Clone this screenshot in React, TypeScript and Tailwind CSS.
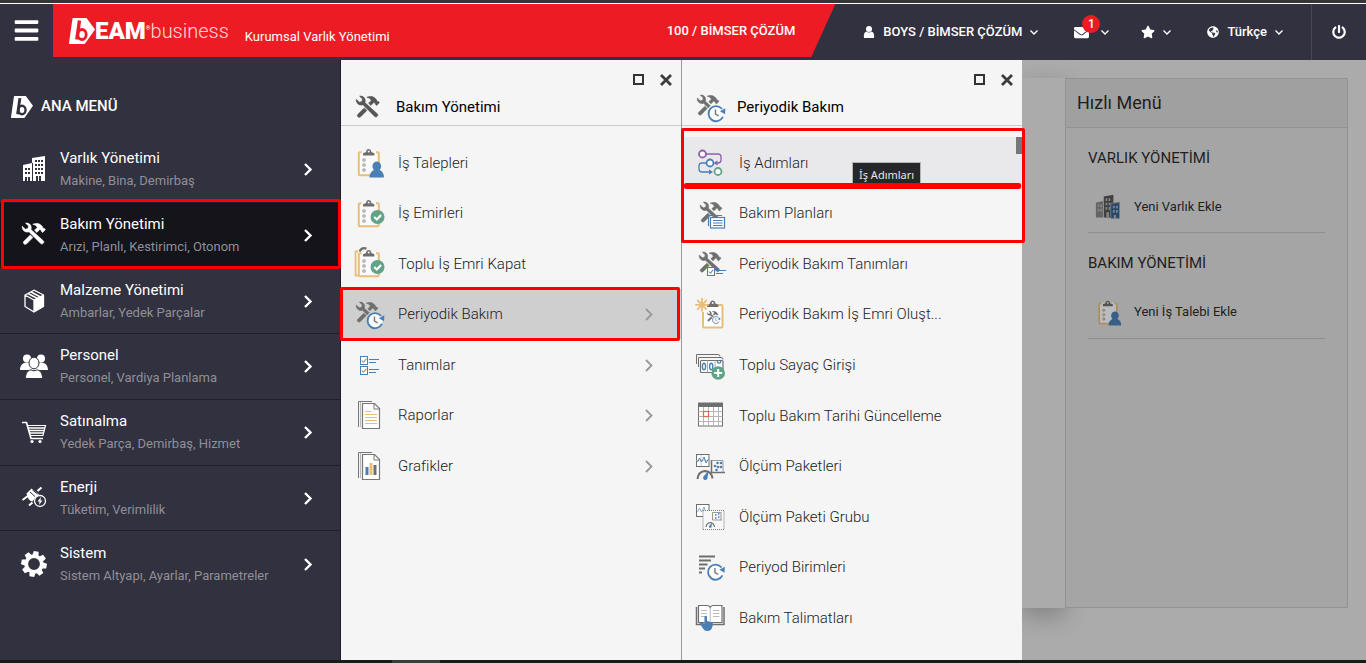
import type { ReactNode } from 'react'
import { FaBars, FaEnvelope, FaGlobeAmericas, FaPowerOff, FaStar } from 'react-icons/fa'

const GRAY = '#6f6f6f'
const BLUE = '#4a7fb5'
const SAND = '#e8bf78'
const GREEN = '#62a287'
const PURPLE = '#8e5fae'

/* ---------- shared icon parts ---------- */

function Svg({ children, size = 32 }: { children: ReactNode; size?: number }) {
  return (
    <svg viewBox="0 0 32 32" width={size} height={size} fill="none" aria-hidden="true" className="shrink-0">
      {children}
    </svg>
  )
}

function ToolsShape({ x, y, scale = 1, color = GRAY }: { x: number; y: number; scale?: number; color?: string }) {
  return (
    <g transform={`translate(${x} ${y}) scale(${scale})`} fill={color} stroke={color} strokeWidth="0.6">
      <path d="M.3 3.2 3.4 6.2 6 5.6 6.6 3 3.6.2C6.4-.4 9.4 1.6 9.2 5l-.3 1.6 12.4 11.2c1.6 1.6-.9 4.3-2.6 2.7L7 8.800c-3.600 1.200-7.200-1.600-6.700-5.600z" />
      <path d="M10.800 1.300C13 .1 16.800.1 18.600 1.800l1.900 2 .4 1.400 1.500.3 1 1.100-2.700 2.900-1.300-1.200-.2-1.300-1.500-.5-2.800 2.900-2.300-2.200 2.700-2.800c-.9-1.700-2.300-2.700-4.500-3.100z" />
      <path d="m8.300 12 2.600 2.400-6.300 6.400c-1.800 1.600-4.400-.7-2.700-2.500z" />
    </g>
  )
}

function ClockShape({ x, y, scale = 1, paper = '#f5f5f5' }: { x: number; y: number; scale?: number; paper?: string }) {
  return (
    <g transform={`translate(${x} ${y}) scale(${scale})`}>
      <circle r="8.800" fill={paper} />
      <circle r="7" fill="#fbfbfb" />
      <path d="M6.400 3.200A7 7 0 1 1 5.600-4.200" stroke={BLUE} strokeWidth="1.700" />
      <path d="M8.600-4.800 8.400.6 3.600-2z" fill={BLUE} />
      <path d="M-.5-3.800V.6l3 1.600" stroke="#777" strokeWidth="1.300" />
    </g>
  )
}

function ClipShape({ x, y }: { x: number; y: number }) {
  return (
    <g transform={`translate(${x} ${y})`}>
      <path d="M0 6.500V4.200L3 3C3.200 1 4.300 0 5.700 0s2.500 1 2.700 3l3 1.200v2.300z" fill={GRAY} />
      <circle cx="5.700" cy="2.600" r="1" fill="#f4f4f4" />
    </g>
  )
}

function BoardShape() {
  return (
    <g>
      <rect x="4.800" y="6.200" width="20" height="23" rx="1" fill="#fafafa" stroke={SAND} strokeWidth="2" />
      <rect x="7.500" y="5" width="14.500" height="4" fill="#fafafa" />
      <ClipShape x={9} y={3} />
      <g stroke="#9a9a9a" strokeWidth="1.100">
        <circle cx="10" cy="14" r="1.200" />
        <circle cx="10" cy="19" r="1.200" />
        <circle cx="10" cy="24" r="1.200" />
      </g>
    </g>
  )
}

function CheckBadge() {
  return (
    <g>
      <circle cx="23.500" cy="20" r="7" fill={GREEN} />
      <path d="m20.200 20 2.600 2.500 4.300-4.600" stroke="#fff" strokeWidth="2.200" />
    </g>
  )
}

/* ---------- list icons ---------- */

function ToolsIcon() {
  return (
    <Svg>
      <ToolsShape x={2} y={5} color="#565656" />
    </Svg>
  )
}

function RequestIcon({ size = 32 }: { size?: number }) {
  return (
    <Svg size={size}>
      <BoardShape />
      <path d="M15.500 31.500c0-4 1.800-6.500 4.500-7.500-3-3-1.400-8.500 2.800-8.500s5.800 5.500 2.800 8.500c2.700 1 4.400 3.500 4.400 7.500z" fill={BLUE} />
    </Svg>
  )
}

function OrderIcon() {
  return (
    <Svg>
      <BoardShape />
      <CheckBadge />
    </Svg>
  )
}

function BulkOrderIcon() {
  return (
    <Svg>
      <path d="M4 4.500H1.500v24H4" stroke={SAND} strokeWidth="1.800" />
      <path d="M5.500 4.500C7 1.500 10 .8 12.500 1.600" stroke={GRAY} strokeWidth="2.200" />
      <BoardShape />
      <CheckBadge />
    </Svg>
  )
}

function PeriodicIcon({ paper }: { paper?: string }) {
  return (
    <Svg>
      <ToolsShape x={2} y={4} scale={0.94} />
      <ClockShape x={21} y={22.500} scale={1.08} paper={paper} />
    </Svg>
  )
}

function DefinitionsIcon() {
  return (
    <Svg>
      {[7, 17].map((y) => (
        <g key={y}>
          <rect x="6.500" y={y + 0.5} width="7" height="8" fill="#fff" stroke={BLUE} />
          <path d={`m8 ${y + 4.500} 1.500 1.800 3-3.600`} stroke="#666" />
          <path d={`M15 ${y + 3.500}h10M15 ${y + 6.500}h7`} stroke={BLUE} strokeWidth="1.100" />
        </g>
      ))}
    </Svg>
  )
}

function PagesShape() {
  return (
    <g stroke="#777">
      <path d="M4.500 28V2.500H18" />
      <path d="M6.500 28V3" stroke="#bbb" />
      <path d="M8.500 4.500h12l5 5v20h-17z" fill="#fff" strokeWidth="1.200" />
      <path d="M20 4.500V10h5.500" />
    </g>
  )
}

function ReportsIcon() {
  return (
    <Svg>
      <PagesShape />
      <path d="M11 12.500h6M11 15.500h12M11 18.500h12M11 21.500h12M11 24.500h12" stroke={SAND} />
    </Svg>
  )
}

function ChartsIcon() {
  return (
    <Svg>
      <PagesShape />
      <path d="M11.500 17h3v8h-3z" fill={BLUE} />
      <path d="M15.500 13h3v12h-3z" fill={SAND} />
      <path d="M19.500 15h3v10h-3z" fill={GRAY} />
    </Svg>
  )
}

function StepsIcon() {
  return (
    <Svg>
      <path d="M11 8h12q3 0 3 3v3q0 3-3 3h-2" stroke={PURPLE} strokeWidth="1.300" />
      <path d="m22.500 14.500-4 2.500 4 2.500z" fill={PURPLE} />
      <path d="M11 17H7q-3 0-3 3v3q0 3 3 3h8" stroke={BLUE} strokeWidth="1.300" />
      <path d="m14 23.500 4 2.500-4 2.500z" fill={BLUE} />
      <circle cx="7.500" cy="8" r="3.500" fill="#fff" stroke={PURPLE} strokeWidth="1.800" />
      <circle cx="15" cy="17" r="3.500" fill="#fff" stroke={BLUE} strokeWidth="1.800" />
      <circle cx="23" cy="25.500" r="3.500" fill="#fff" stroke={GREEN} strokeWidth="1.800" />
    </Svg>
  )
}

function PlansIcon() {
  return (
    <Svg>
      <ToolsShape x={5} y={5} scale={0.94} />
      <path d="M13.500 29V18.500H27" stroke={BLUE} strokeWidth="1.200" />
      <rect x="15.500" y="20.500" width="14" height="10.500" fill="#fff" stroke={BLUE} strokeWidth="1.200" />
      <path d="M18 23.500h9.500M18 26h9.500M18 28.500h9.500" stroke={BLUE} />
    </Svg>
  )
}

function PeriodicDefinitionsIcon() {
  return (
    <Svg>
      <ToolsShape x={4} y={5} scale={0.94} />
      <rect x="12.500" y="20.500" width="7" height="8" fill="#fff" stroke={BLUE} />
      <path d="m14 24.500 1.500 1.800 2.500-3.600" stroke="#666" />
      <path d="M21 23.500h10M21 26.500h7" stroke={BLUE} />
    </Svg>
  )
}

function CreateOrderIcon() {
  return (
    <Svg>
      <rect x="8" y="7" width="19.500" height="22.500" rx="1" fill="#fff" stroke={SAND} strokeWidth="2" />
      <path d="M0 0h14v14H0z" fill="#f5f5f5" />
      <path d="M9 15V8h14v7z" fill="#fff" />
      <ClipShape x={12} y={2.500} />
      <path d="M7 0v13.500M.2 6.800h13.500M2.200 2l9.600 9.600M11.800 2l-9.600 9.600" stroke={SAND} strokeWidth="1.800" />
      <ToolsShape x={12} y={13} scale={0.48} />
      <ClockShape x={21} y={22} scale={0.5} paper="#fff" />
    </Svg>
  )
}

function CounterIcon() {
  return (
    <Svg>
      <path d="M1.500 15V5.500H23q2 0 2 2" stroke={GRAY} />
      <path d="M3.500 18V8.500H26q2 0 2 2" stroke={GRAY} />
      <rect x="5.500" y="11.500" width="22.500" height="12" rx="1" fill="#fff" stroke={GRAY} strokeWidth="1.200" />
      <path d="M12.500 11.500v12M20 11.500v12" stroke="#aaa" />
      <g stroke={BLUE} strokeWidth="1.400">
        <ellipse cx="9" cy="17.500" rx="1.600" ry="3.200" />
        <ellipse cx="16.200" cy="17.500" rx="1.600" ry="3.200" />
        <path d="M22.500 11.500v1q0 1.600 1.600 1.600t1.600-1.600v-1" />
      </g>
      <circle cx="23.200" cy="24" r="6.800" fill={GREEN} />
      <path d="M23.200 20v8M19.200 24h8" stroke="#fff" strokeWidth="2" />
    </Svg>
  )
}

function CalendarIcon() {
  return (
    <Svg>
      <rect x="3.500" y="4.500" width="24" height="22.500" fill="#fff" stroke={GRAY} />
      <path d="M3.500 12.500h24M3.500 17.500h24M3.500 22.500h24M8.500 8v19M13.500 8v19M18.500 8v19M23.500 8v19" stroke="#b5b5b5" />
      <path d="M3 3.500h25V8H3z" fill={GRAY} />
      <rect x="8.500" y="12.500" width="5" height="5" stroke="#dd6b50" strokeWidth="1.200" />
    </Svg>
  )
}

function MeasureIcon() {
  return (
    <Svg>
      <rect x="1.500" y="4.500" width="12.500" height="12" fill="#fff" stroke={GRAY} />
      <path d="M1.500 10.500h12.500M6 5v11" stroke="#ccc" />
      <path d="m2.500 12 2-4 2 4 2.500-5 2 6 2.500-4" stroke={BLUE} />
      <path d="M16.500 10v12.500H30" stroke={GRAY} strokeWidth="1.500" />
      <path d="M16.500 10.500H28v12" stroke="#999" />
      <g fill={BLUE}>
        <circle cx="20" cy="16" r="1.300" />
        <circle cx="22.500" cy="13" r="1.300" />
        <circle cx="23" cy="17" r="1.300" />
        <circle cx="26" cy="13" r="1.300" />
        <circle cx="26" cy="17" r="1.300" />
        <circle cx="21.500" cy="20" r="1.300" />
      </g>
      <path d="M2.500 29q.5-7 7-8 7 0 8 7.500" stroke={GRAY} strokeWidth="2" />
      <path d="m13.500 20.500-1 7.500a2.200 2.200 0 1 1-3.500-2z" fill={BLUE} />
    </Svg>
  )
}

function MeasureGroupIcon() {
  return (
    <Svg>
      <rect x="1.500" y="4.500" width="12.500" height="12" fill="#fff" stroke={GRAY} />
      <path d="m2.500 12 2-4 2 4 2.500-5 2 6" stroke="#87a8c8" />
      <rect x="8" y="10.500" width="21" height="19" fill="#f8f8f8" stroke="#777" strokeDasharray="1 1" />
      <path d="M17.500 12.500v7.500H27M17.500 12.500h8.500V20" stroke="#999" />
      <path d="M20 15h1.500M20 18h1.500M23 14h1.500M23 17h1.500" stroke={BLUE} strokeWidth="1.400" />
      <path d="M11 27q.5-4 4.500-4.500 3.500.5 4 4.500" stroke={GRAY} strokeWidth="1.200" />
      <path d="m17 22.500-.5 4a1.300 1.300 0 1 1-2-1z" fill={BLUE} />
    </Svg>
  )
}

function PeriodUnitsIcon() {
  return (
    <Svg>
      <path d="M4 5.500h16M4 9.500h12M4 13.500h8.500M4 17.500h6M4 21.500h3" stroke={GRAY} strokeWidth="2" />
      <ClockShape x={20.500} y={21} scale={1.08} />
    </Svg>
  )
}

function ManualIcon() {
  return (
    <Svg>
      <path d="M1.500 5v17.500h13l1 1 1-1h12.500V5" stroke={GRAY} strokeWidth="1.500" />
      <path d="M3.500 3.500h9q2 .2 2.700 2 .8-1.800 2.800-2h9v17H16l-1 1-1-1H3.500z" fill="#fff" stroke={GRAY} strokeWidth="1.200" />
      <path d="M15.200 5.500v15M6 8.500h6M6 11.500h6M6 14.500h4M18 8.500h6.500M18 11.500h6.500M18 14.500h6.500" stroke="#bbb" />
      <path d="M9.500 14.500q1.500-1.500 2.500 0v4.500l4.500 1.200q1.800.4 1.400 2.300l-.9 3.500q-1.200 3-4.500 3t-4.500-2.500l-3.500-5.500q.5-1.500 2.500-.5l2.500 1.500z" fill={BLUE} />
    </Svg>
  )
}

function AssetIcon() {
  return (
    <Svg size={28}>
      <path d="M1 11l8-2v19H1z" fill="#858585" />
      <path d="M3 13h2v3H3zm3 0h2v3H6zm-3 5h2v3H3zm3 0h2v3H6z" fill="#b0b0b0" />
      <path d="M10 4l11-2v26H10z" fill="#555" />
      <path d="M12 6h2v3h-2zm3.500 0h2v3h-2zm-3.500 5h2v3h-2zm3.500 0h2v3h-2zm-3.500 5h2v3h-2zm3.500 0h2v3h-2zM13 22h3v6h-3z" fill="#b0b0b0" />
      <path d="M18 12l10-1.500V29H18z" fill="#35608f" stroke="#a5a5a5" />
      <path d="M20.500 14.500h2v3h-2zm3.500 0h2v3h-2zm-3.500 5h2v3h-2zm3.500 0h2v3h-2zM21.500 25h2.500v4h-2.500z" fill="#b0b0b0" />
    </Svg>
  )
}

/* ---------- sidebar icons, white on dark ---------- */

function BuildingsIcon() {
  return (
    <svg viewBox="0 0 28 28" width="28" height="28" aria-hidden="true">
      <path fill="#fff" d="M3 10l9-2V3l13-2v25H3z" />
      <path fill="#32313f" d="M12 8h1v18h-1zM5 13h2v2H5zm3 0h2v2H8zm-3 4h2v2H5zm3 0h2v2H8zm-3 5h2v4H5zm3 0h2v4H8zM15 5h2v2h-2zm3 0h2v2h-2zm3 0h2v2h-2zm-6 4h2v2h-2zm3 0h2v2h-2zm3 0h2v2h-2zm-6 4h2v2h-2zm3 0h2v2h-2zm3 0h2v2h-2zm-6 4h2v2h-2zm3 0h2v2h-2zm3 0h2v2h-2zm-5 4h2v5h-2zm3 0h2v5h-2z" />
    </svg>
  )
}

function WhiteToolsIcon() {
  return (
    <svg viewBox="0 0 28 28" width="28" height="28" aria-hidden="true">
      <ToolsShape x={2} y={2} color="#fff" />
    </svg>
  )
}

function BoxIcon() {
  return (
    <svg viewBox="0 0 28 28" width="28" height="28" fill="none" aria-hidden="true">
      <path d="M14 13l9.500-5v11.500L14 25z" fill="#fff" />
      <path d="M14 3.200 23.500 8v11.500L14 25l-9-5.500V8zM5 8l9 5 9.500-5M14 13v12" stroke="#fff" strokeWidth="1.300" strokeLinejoin="round" />
      <path d="m8 6.500 9.500 5M11 5l9.500 5" stroke="#fff" strokeWidth="1.500" />
    </svg>
  )
}

function PeopleIcon() {
  return (
    <svg viewBox="0 0 28 28" width="28" height="28" fill="#fff" aria-hidden="true">
      <circle cx="7" cy="6.500" r="4" />
      <circle cx="21" cy="6.500" r="4" />
      <path d="M0 18c0-4.500 2.500-7.500 7-7.500S14 13 14 18zM14 18c0-5 2.500-7.500 7-7.500s7 3 7 7.500z" />
      <g stroke="#32313f" strokeWidth="1">
        <ellipse cx="14" cy="11" rx="5" ry="5.800" />
        <path d="M5.500 26.500c0-5 2-8 5.500-8.700 2 1.300 4 1.300 6 0 3.500.7 5.500 3.700 5.500 8.700z" />
      </g>
    </svg>
  )
}

function CartIcon() {
  return (
    <svg viewBox="0 0 28 28" width="28" height="28" fill="none" stroke="#fff" aria-hidden="true">
      <path d="M2 4.500h4.500L11 20.500h12" strokeWidth="1.700" />
      <path d="M7 7.500h18.500L23 17.500H10.500" strokeWidth="1.200" />
      <path d="M8 10h17M9 12.500h15.500M9.500 15h14.500" strokeWidth="1.400" />
      <circle cx="12" cy="23.500" r="1.600" fill="#fff" stroke="none" />
      <circle cx="20" cy="23.500" r="1.600" fill="#fff" stroke="none" />
    </svg>
  )
}

function EnergyIcon() {
  return (
    <svg viewBox="0 0 28 28" width="28" height="28" fill="none" aria-hidden="true">
      <path d="m6.500 9.500 5-5 7.500 6-4.500 4-2 3c-3-.5-5-3-6-8z" fill="#fff" />
      <path d="m10 8 5 4.500M12.500 6l5 4" stroke="#32313f" />
      <path d="m2.500 16 6-4.500M17.500 7l4-3.500M9 21.500l3.500-3" stroke="#fff" strokeWidth="2" />
      <circle cx="20" cy="17" r="5.500" fill="#32313f" stroke="#fff" strokeWidth="1.300" />
      <path d="m21 13-3.500 4.500h2L19 21l3.500-4.500h-2z" fill="#fff" />
    </svg>
  )
}

function GearIcon() {
  return (
    <svg viewBox="-14 -14 28 28" width="28" height="28" fill="#fff" aria-hidden="true">
      {[10, 55, 100, 145, 190, 235, 280, 325].map((angle) => (
        <path key={angle} d="M-3.200-8-2.400-12.800h4.800L3.200-8z" transform={`rotate(${angle})`} />
      ))}
      <circle r="7.800" fill="none" stroke="#fff" strokeWidth="3.800" />
    </svg>
  )
}

function BeamMark({ cut, size }: { cut: string; size: number }) {
  return (
    <svg viewBox="0 0 26 26" width={size} height={size} fill="none" aria-hidden="true" className="shrink-0">
      <path d="M3.500.5q.2-.5.800-.5h13.200L26 11.500 16.500 25q-.5 1-1.500 1H.8q-.8 0-.8-1z" fill="#fff" />
      <path d="M10.500 2.500 7.800 21.500" stroke={cut} strokeWidth="3.400" />
      <ellipse cx="13" cy="16.500" rx="4.200" ry="5" stroke={cut} strokeWidth="2.800" />
    </svg>
  )
}

function Chevron({ tone }: { tone: 'light' | 'gray' }) {
  return (
    <svg viewBox="0 0 10 16" width="10" height="16" fill="none" aria-hidden="true" className="shrink-0">
      {tone === 'light' ? (
        <path d="m2 3 5.500 5.500L2 14" stroke="#fff" strokeWidth="2.400" />
      ) : (
        <path d="m2 3 5.500 5.500L2 14" stroke="#999" strokeWidth="1.800" />
      )}
    </svg>
  )
}

function DownArrow() {
  return (
    <svg viewBox="0 0 8 8" width="8" height="8" fill="none" aria-hidden="true">
      <path d="m.5 2.500 3.500 3.500 3.500-3.500" stroke="#fff" strokeWidth="1.400" />
    </svg>
  )
}

function UserIcon() {
  return (
    <svg viewBox="0 0 12 12" width="12" height="12" fill="#fff" aria-hidden="true">
      <circle cx="6" cy="3" r="3" />
      <path d="M1 12c-.6-3.500.5-6 2.400-6.400 1.600 1.200 3.600 1.200 5.200 0C10.500 6 11.600 8.500 11 12z" />
    </svg>
  )
}

/* ---------- data ---------- */

type MainItem = { title: string; detail: string; icon: ReactNode; active?: boolean }
type PanelItem = { label: string; icon: ReactNode; nested?: boolean; state?: 'selected' | 'hovered' }

const mainItems: MainItem[] = [
  { title: 'Varlık Yönetimi', detail: 'Makine, Bina, Demirbaş', icon: <BuildingsIcon /> },
  { title: 'Bakım Yönetimi', detail: 'Arızi, Planlı, Kestirimci, Otonom', icon: <WhiteToolsIcon />, active: true },
  { title: 'Malzeme Yönetimi', detail: 'Ambarlar, Yedek Parçalar', icon: <BoxIcon /> },
  { title: 'Personel', detail: 'Personel, Vardiya Planlama', icon: <PeopleIcon /> },
  { title: 'Satınalma', detail: 'Yedek Parça, Demirbaş, Hizmet', icon: <CartIcon /> },
  { title: 'Enerji', detail: 'Tüketim, Verimlilik', icon: <EnergyIcon /> },
  { title: 'Sistem', detail: 'Sistem Altyapı, Ayarlar, Parametreler', icon: <GearIcon /> },
]

const maintenanceItems: PanelItem[] = [
  { label: 'İş Talepleri', icon: <RequestIcon /> },
  { label: 'İş Emirleri', icon: <OrderIcon /> },
  { label: 'Toplu İş Emri Kapat', icon: <BulkOrderIcon /> },
  { label: 'Periyodik Bakım', icon: <PeriodicIcon paper="#cfcfcf" />, nested: true, state: 'selected' },
  { label: 'Tanımlar', icon: <DefinitionsIcon />, nested: true },
  { label: 'Raporlar', icon: <ReportsIcon />, nested: true },
  { label: 'Grafikler', icon: <ChartsIcon />, nested: true },
]

const periodicItems: PanelItem[] = [
  { label: 'İş Adımları', icon: <StepsIcon />, state: 'hovered' },
  { label: 'Bakım Planları', icon: <PlansIcon /> },
  { label: 'Periyodik Bakım Tanımları', icon: <PeriodicDefinitionsIcon /> },
  { label: 'Periyodik Bakım İş Emri Oluşt...', icon: <CreateOrderIcon /> },
  { label: 'Toplu Sayaç Girişi', icon: <CounterIcon /> },
  { label: 'Toplu Bakım Tarihi Güncelleme', icon: <CalendarIcon /> },
  { label: 'Ölçüm Paketleri', icon: <MeasureIcon /> },
  { label: 'Ölçüm Paketi Grubu', icon: <MeasureGroupIcon /> },
  { label: 'Periyod Birimleri', icon: <PeriodUnitsIcon /> },
  { label: 'Bakım Talimatları', icon: <ManualIcon /> },
]

/* ---------- sections ---------- */

function Header() {
  return (
    <header className="flex h-14 shrink-0 items-start bg-[#32313f] text-white">
      <button type="button" aria-label="Menü" className="flex h-[53px] w-[53px] items-center justify-center">
        <FaBars className="size-[27px]" />
      </button>
      <div className="flex h-[53px] flex-1 items-center bg-[#ed1c24] pr-10 pl-4 [clip-path:polygon(0_0,100%_0,calc(100%-24px)_100%,0_100%)]">
        <a href="#" className="flex items-center">
          <BeamMark cut="#ed1c24" size={26} />
          <span className="text-2xl leading-6 font-black">EAM</span>
          <sup className="text-[6px]">®</sup>
          <span className="text-xl leading-6 font-light text-[#ffd9da]">business</span>
        </a>
        <span className="ml-4 pt-3 text-[13px]">Kurumsal Varlık Yönetimi</span>
        <span className="ml-auto text-[13px] font-medium">100 / BİMSER ÇÖZÜM</span>
      </div>
      <nav className="flex h-14 items-center text-[13px] font-medium">
        <button type="button" className="ml-7 flex items-center gap-2">
          <UserIcon />
          BOYS / BİMSER ÇÖZÜM
          <DownArrow />
        </button>
        <button type="button" aria-label="Mesajlar" className="relative ml-9 flex items-center gap-3">
          <FaEnvelope className="size-[15px]" />
          <DownArrow />
          <span className="absolute -top-[10px] left-2 flex size-[18px] items-center justify-center rounded-full bg-[#ed1c24] text-xs">
            1
          </span>
        </button>
        <button type="button" aria-label="Favoriler" className="ml-8 flex items-center gap-2">
          <FaStar className="size-[14px]" />
          <DownArrow />
        </button>
        <button type="button" className="mr-7 ml-9 flex items-center gap-2">
          <FaGlobeAmericas className="size-3" />
          Türkçe
          <DownArrow />
        </button>
        <button
          type="button"
          aria-label="Çıkış"
          className="flex h-full w-[55px] items-center justify-center border-l border-[#474656]"
        >
          <FaPowerOff className="size-[14px]" />
        </button>
      </nav>
    </header>
  )
}

function MainMenu() {
  return (
    <nav className="w-[341px] shrink-0 border-r border-[#1d1c28] bg-[#32313f] text-white">
      <div className="flex h-[77px] items-center gap-2 pt-4 pl-[11px]">
        <BeamMark cut="#32313f" size={22} />
        <h1 className="text-[15px] font-medium">ANA MENÜ</h1>
      </div>
      <ul className="grid h-[460px] auto-rows-fr">
        {mainItems.map((item) => (
          <li
            key={item.title}
            className={`border-b border-[#1f1e2a] last:border-b-0 ${item.active ? 'bg-[#15141a]' : ''}`}
          >
            <a href="#" className="flex h-full items-center pr-[27px] pl-5">
              <span className="flex w-7 justify-center">{item.icon}</span>
              <span className="ml-3 flex-1">
                <span className="block text-[15px] leading-6">{item.title}</span>
                <span className="block text-[13px] leading-[22px] text-[#8f8f97]">{item.detail}</span>
              </span>
              <Chevron tone="light" />
            </a>
          </li>
        ))}
      </ul>
    </nav>
  )
}

function SubMenu({
  title,
  icon,
  items,
  listHeight,
  children,
}: {
  title: string
  icon: ReactNode
  items: PanelItem[]
  listHeight: string
  children?: ReactNode
}) {
  return (
    <section className="relative shrink-0 bg-[#f5f5f5]">
      <div className="h-[66px] border-b border-[#cbcbcb]">
        <div className="flex h-[33px] items-center justify-end gap-4 pt-[6px] pr-[9px]">
          <button type="button" aria-label="Büyüt" className="size-[11px] border-2 border-[#333]" />
          <button type="button" aria-label="Kapat">
            <svg viewBox="0 0 12 12" width="12" height="12" aria-hidden="true">
              <path d="m1 1 10 10M11 1 1 11" stroke="#3c3c3c" strokeWidth="2.800" />
            </svg>
          </button>
        </div>
        <div className="flex h-7 items-center gap-[10px] pl-[13px]">
          {icon}
          <h2 className="text-[15px] text-black">{title}</h2>
        </div>
      </div>
      <ul className={`mt-[11px] grid auto-rows-fr ${listHeight}`}>
        {items.map((item) => (
          <li
            key={item.label}
            className={item.state === 'selected' ? 'bg-[#cfcfcf]' : item.state === 'hovered' ? 'bg-[#e9e9eb]' : ''}
          >
            <a href="#" className="flex h-full items-center gap-3 pr-[27px] pl-[13px] text-[15px] font-light text-[#222]">
              {item.icon}
              <span className="flex-1 pt-px">{item.label}</span>
              {item.nested && <Chevron tone="gray" />}
            </a>
          </li>
        ))}
      </ul>
      {children}
    </section>
  )
}

function QuickMenu() {
  return (
    <aside className="mt-[18px] mr-[18px] h-[530px] flex-1 border border-[#929292] bg-[#a5a5a5] text-[#1f1f1f]">
      <h2 className="flex h-[49px] items-center border-b border-[#929292] bg-[#a0a0a0] pl-[11px] text-lg">Hızlı Menü</h2>
      <div className="px-[22px]">
        {[
          { heading: 'VARLIK YÖNETİMİ', label: 'Yeni Varlık Ekle', icon: <AssetIcon /> },
          { heading: 'BAKIM YÖNETİMİ', label: 'Yeni İş Talebi Ekle', icon: <RequestIcon size={28} /> },
        ].map((group) => (
          <section key={group.heading} className="h-[105px] border-b border-[#8f8f8f] pt-[18px] last:h-[106px]">
            <h3 className="text-[15px] leading-6">{group.heading}</h3>
            <a href="#" className="mt-[11px] flex h-[52px] items-center gap-[11px] pl-[7px] text-[13px]">
              <span className="brightness-75">{group.icon}</span>
              {group.label}
            </a>
          </section>
        ))}
      </div>
    </aside>
  )
}

export default function App() {
  return (
    <div
      lang="tr"
      className="flex min-h-screen flex-col bg-[#32313f]"
      style={{ fontFamily: 'Roboto, "Liberation Sans", sans-serif' }}
    >
      <div className="h-1 shrink-0 border-b border-white bg-[#363636]" />
      <Header />
      <div className="relative flex flex-1 bg-[#ababab]">
        <MainMenu />
        <div className="flex w-[341px] shrink-0 border-r border-[#999] bg-[#f5f5f5] *:flex-1">
          <SubMenu title="Bakım Yönetimi" icon={<ToolsIcon />} items={maintenanceItems} listHeight="h-[354px]" />
        </div>
        <div className="z-10 flex w-[340px] shrink-0 *:flex-1">
          <SubMenu title="Periyodik Bakım" icon={<PeriodicIcon />} items={periodicItems} listHeight="h-[506px]">
            <div className="absolute top-[77px] right-0 h-[17px] w-[6px] bg-[#777]" />
            <div
              role="tooltip"
              className="absolute top-[102px] left-[170px] border border-[#b5b5b5] bg-[#26272b] px-[6px] text-[11px] leading-6 text-[#e6e6e6]"
              style={{ fontFamily: '"Noto Sans", sans-serif' }}
            >
              İş Adımları
            </div>
          </SubMenu>
        </div>
        <main className="flex flex-1">
          <div className="mt-[18px] h-[530px] w-[43px] shrink-0 bg-[#ababab] shadow-[0_8px_24px_rgba(0,0,0,0.25)]" />
          <QuickMenu />
        </main>

        {/* highlight frames over the menu */}
        <div className="absolute top-[139px] left-px h-[70px] w-[340px] rounded-xs border-3 border-[#f00]" />
        <div className="absolute top-[227px] left-[340px] z-20 h-[54px] w-[340px] rounded-xs border-3 border-[#f00]" />
        <div className="absolute top-[68px] left-[681px] z-20 h-[115px] w-[344px] rounded-xs border-3 border-[#f00]">
          <div className="mt-[52px] mr-px h-[6px] rounded-xs bg-[#f00]" />
        </div>
      </div>
      <div className="h-[3px] shrink-0 bg-[#1b191a]">
        <div className="ml-[392px] h-full w-12 bg-[#3c3a3b]" />
      </div>
    </div>
  )
}
